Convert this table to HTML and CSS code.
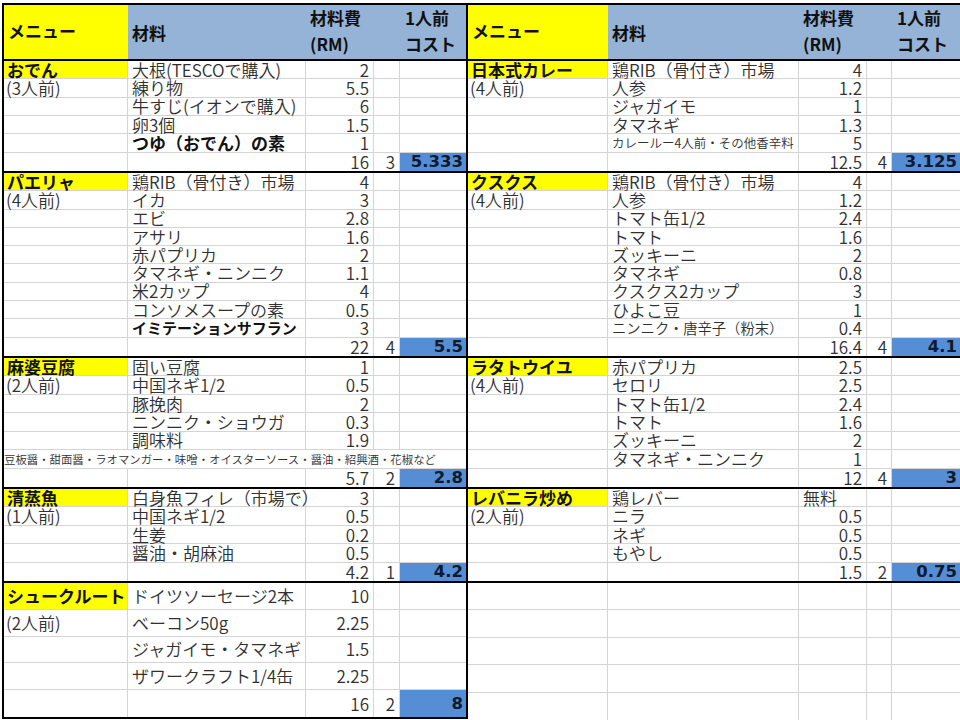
FILE: index.html
```html
<!DOCTYPE html>
<html lang="ja">
<head>
<meta charset="utf-8">
<title>材料費</title>
<link rel="stylesheet" href="styles.css">
</head>
<body>
<div class="sheet">
  <section class="side side-left">
    <div class="head">
      <div class="h h-menu">メニュー</div>
      <div class="h">材料</div>
      <div class="h h-two"><span>材料費</span><span>(RM)</span></div>
      <div class="h"></div>
      <div class="h h-two h-per"><span>1人前</span><span>コスト</span></div>
    </div>

    <div class="block b6">
      <div class="row"><div class="c name">おでん</div><div class="c">大根(TESCOで購入)</div><div class="c num">2</div><div class="c"></div><div class="c"></div></div>
      <div class="row"><div class="c serv">(3人前)</div><div class="c">練り物</div><div class="c num">5.5</div><div class="c"></div><div class="c"></div></div>
      <div class="row"><div class="c"></div><div class="c">牛すじ(イオンで購入)</div><div class="c num">6</div><div class="c"></div><div class="c"></div></div>
      <div class="row"><div class="c"></div><div class="c">卵3個</div><div class="c num">1.5</div><div class="c"></div><div class="c"></div></div>
      <div class="row"><div class="c"></div><div class="c bold">つゆ（おでん）の素</div><div class="c num">1</div><div class="c"></div><div class="c"></div></div>
      <div class="row"><div class="c"></div><div class="c"></div><div class="c num">16</div><div class="c num">3</div><div class="c tot">5.333</div></div>
    </div>

    <div class="block b10">
      <div class="row"><div class="c name">パエリャ</div><div class="c">鶏RIB（骨付き）市場</div><div class="c num">4</div><div class="c"></div><div class="c"></div></div>
      <div class="row"><div class="c serv">(4人前)</div><div class="c">イカ</div><div class="c num">3</div><div class="c"></div><div class="c"></div></div>
      <div class="row"><div class="c"></div><div class="c">エビ</div><div class="c num">2.8</div><div class="c"></div><div class="c"></div></div>
      <div class="row"><div class="c"></div><div class="c">アサリ</div><div class="c num">1.6</div><div class="c"></div><div class="c"></div></div>
      <div class="row"><div class="c"></div><div class="c">赤パプリカ</div><div class="c num">2</div><div class="c"></div><div class="c"></div></div>
      <div class="row"><div class="c"></div><div class="c">タマネギ・ニンニク</div><div class="c num">1.1</div><div class="c"></div><div class="c"></div></div>
      <div class="row"><div class="c"></div><div class="c">米2カップ</div><div class="c num">4</div><div class="c"></div><div class="c"></div></div>
      <div class="row"><div class="c"></div><div class="c">コンソメスープの素</div><div class="c num">0.5</div><div class="c"></div><div class="c"></div></div>
      <div class="row"><div class="c"></div><div class="c bold-sm">イミテーションサフラン</div><div class="c num">3</div><div class="c"></div><div class="c"></div></div>
      <div class="row"><div class="c"></div><div class="c"></div><div class="c num">22</div><div class="c num">4</div><div class="c tot">5.5</div></div>
    </div>

    <div class="block b7">
      <div class="row"><div class="c name">麻婆豆腐</div><div class="c">固い豆腐</div><div class="c num">1</div><div class="c"></div><div class="c"></div></div>
      <div class="row"><div class="c serv">(2人前)</div><div class="c">中国ネギ1/2</div><div class="c num">0.5</div><div class="c"></div><div class="c"></div></div>
      <div class="row"><div class="c"></div><div class="c">豚挽肉</div><div class="c num">2</div><div class="c"></div><div class="c"></div></div>
      <div class="row"><div class="c"></div><div class="c">ニンニク・ショウガ</div><div class="c num">0.3</div><div class="c"></div><div class="c"></div></div>
      <div class="row"><div class="c"></div><div class="c">調味料</div><div class="c num">1.9</div><div class="c"></div><div class="c"></div></div>
      <div class="row"><div class="c note">豆板醤・甜面醤・ラオマンガー・味噌・オイスターソース・醤油・紹興酒・花椒など</div></div>
      <div class="row"><div class="c"></div><div class="c"></div><div class="c num">5.7</div><div class="c num">2</div><div class="c tot">2.8</div></div>
    </div>

    <div class="block b5">
      <div class="row"><div class="c name">清蒸魚</div><div class="c">白身魚フィレ（市場で）</div><div class="c num">3</div><div class="c"></div><div class="c"></div></div>
      <div class="row"><div class="c serv">(1人前)</div><div class="c">中国ネギ1/2</div><div class="c num">0.5</div><div class="c"></div><div class="c"></div></div>
      <div class="row"><div class="c"></div><div class="c">生姜</div><div class="c num">0.2</div><div class="c"></div><div class="c"></div></div>
      <div class="row"><div class="c"></div><div class="c">醤油・胡麻油</div><div class="c num">0.5</div><div class="c"></div><div class="c"></div></div>
      <div class="row"><div class="c"></div><div class="c"></div><div class="c num">4.2</div><div class="c num">1</div><div class="c tot">4.2</div></div>
    </div>

    <div class="block b5t">
      <div class="row"><div class="c name">シュークルート</div><div class="c">ドイツソーセージ2本</div><div class="c num">10</div><div class="c"></div><div class="c"></div></div>
      <div class="row"><div class="c serv">(2人前)</div><div class="c">ベーコン50g</div><div class="c num">2.25</div><div class="c"></div><div class="c"></div></div>
      <div class="row"><div class="c"></div><div class="c">ジャガイモ・タマネギ</div><div class="c num">1.5</div><div class="c"></div><div class="c"></div></div>
      <div class="row"><div class="c"></div><div class="c">ザワークラフト1/4缶</div><div class="c num">2.25</div><div class="c"></div><div class="c"></div></div>
      <div class="row"><div class="c"></div><div class="c"></div><div class="c num">16</div><div class="c num">2</div><div class="c tot">8</div></div>
    </div>
  </section>

  <section class="side side-right">
    <div class="head">
      <div class="h h-menu">メニュー</div>
      <div class="h">材料</div>
      <div class="h h-two"><span>材料費</span><span>(RM)</span></div>
      <div class="h"></div>
      <div class="h h-two h-per"><span>1人前</span><span>コスト</span></div>
    </div>

    <div class="block b6">
      <div class="row"><div class="c name">日本式カレー</div><div class="c">鶏RIB（骨付き）市場</div><div class="c num">4</div><div class="c"></div><div class="c"></div></div>
      <div class="row"><div class="c serv">(4人前)</div><div class="c">人参</div><div class="c num">1.2</div><div class="c"></div><div class="c"></div></div>
      <div class="row"><div class="c"></div><div class="c">ジャガイモ</div><div class="c num">1</div><div class="c"></div><div class="c"></div></div>
      <div class="row"><div class="c"></div><div class="c">タマネギ</div><div class="c num">1.3</div><div class="c"></div><div class="c"></div></div>
      <div class="row"><div class="c"></div><div class="c small">カレールー4人前・その他香辛料</div><div class="c num">5</div><div class="c"></div><div class="c"></div></div>
      <div class="row"><div class="c"></div><div class="c"></div><div class="c num">12.5</div><div class="c num">4</div><div class="c tot">3.125</div></div>
    </div>

    <div class="block b10">
      <div class="row"><div class="c name">クスクス</div><div class="c">鶏RIB（骨付き）市場</div><div class="c num">4</div><div class="c"></div><div class="c"></div></div>
      <div class="row"><div class="c serv">(4人前)</div><div class="c">人参</div><div class="c num">1.2</div><div class="c"></div><div class="c"></div></div>
      <div class="row"><div class="c"></div><div class="c">トマト缶1/2</div><div class="c num">2.4</div><div class="c"></div><div class="c"></div></div>
      <div class="row"><div class="c"></div><div class="c">トマト</div><div class="c num">1.6</div><div class="c"></div><div class="c"></div></div>
      <div class="row"><div class="c"></div><div class="c">ズッキーニ</div><div class="c num">2</div><div class="c"></div><div class="c"></div></div>
      <div class="row"><div class="c"></div><div class="c">タマネギ</div><div class="c num">0.8</div><div class="c"></div><div class="c"></div></div>
      <div class="row"><div class="c"></div><div class="c">クスクス2カップ</div><div class="c num">3</div><div class="c"></div><div class="c"></div></div>
      <div class="row"><div class="c"></div><div class="c">ひよこ豆</div><div class="c num">1</div><div class="c"></div><div class="c"></div></div>
      <div class="row"><div class="c"></div><div class="c mid">ニンニク・唐辛子（粉末）</div><div class="c num">0.4</div><div class="c"></div><div class="c"></div></div>
      <div class="row"><div class="c"></div><div class="c"></div><div class="c num">16.4</div><div class="c num">4</div><div class="c tot">4.1</div></div>
    </div>

    <div class="block b7">
      <div class="row"><div class="c name">ラタトウイユ</div><div class="c">赤パプリカ</div><div class="c num">2.5</div><div class="c"></div><div class="c"></div></div>
      <div class="row"><div class="c serv">(4人前)</div><div class="c">セロリ</div><div class="c num">2.5</div><div class="c"></div><div class="c"></div></div>
      <div class="row"><div class="c"></div><div class="c">トマト缶1/2</div><div class="c num">2.4</div><div class="c"></div><div class="c"></div></div>
      <div class="row"><div class="c"></div><div class="c">トマト</div><div class="c num">1.6</div><div class="c"></div><div class="c"></div></div>
      <div class="row"><div class="c"></div><div class="c">ズッキーニ</div><div class="c num">2</div><div class="c"></div><div class="c"></div></div>
      <div class="row"><div class="c"></div><div class="c">タマネギ・ニンニク</div><div class="c num">1</div><div class="c"></div><div class="c"></div></div>
      <div class="row"><div class="c"></div><div class="c"></div><div class="c num">12</div><div class="c num">4</div><div class="c tot">3</div></div>
    </div>

    <div class="block b5">
      <div class="row"><div class="c name">レバニラ炒め</div><div class="c">鶏レバー</div><div class="c">無料</div><div class="c"></div><div class="c"></div></div>
      <div class="row"><div class="c serv">(2人前)</div><div class="c">ニラ</div><div class="c num">0.5</div><div class="c"></div><div class="c"></div></div>
      <div class="row"><div class="c"></div><div class="c">ネギ</div><div class="c num">0.5</div><div class="c"></div><div class="c"></div></div>
      <div class="row"><div class="c"></div><div class="c">もやし</div><div class="c num">0.5</div><div class="c"></div><div class="c"></div></div>
      <div class="row"><div class="c"></div><div class="c"></div><div class="c num">1.5</div><div class="c num">2</div><div class="c tot">0.75</div></div>
    </div>

    <div class="block b5t open">
      <div class="row"><div class="c"></div><div class="c"></div><div class="c"></div><div class="c"></div><div class="c"></div></div>
      <div class="row"><div class="c"></div><div class="c"></div><div class="c"></div><div class="c"></div><div class="c"></div></div>
      <div class="row"><div class="c"></div><div class="c"></div><div class="c"></div><div class="c"></div><div class="c"></div></div>
      <div class="row"><div class="c"></div><div class="c"></div><div class="c"></div><div class="c"></div><div class="c"></div></div>
      <div class="row"><div class="c"></div><div class="c"></div><div class="c"></div><div class="c"></div><div class="c"></div></div>
    </div>
  </section>
</div>
</body>
</html>
```

FILE: styles.css
```css
* {
  box-sizing: border-box;
  margin: 0;
  padding: 0;
}

html,
body {
  width: 960px;
  height: 720px;
  overflow: hidden;
  background: #fff;
}

body {
  font-family: "Noto Sans CJK JP", "Noto Sans", sans-serif;
  font-size: 17px;
  font-weight: 350;
  color: #303030;
}

.sheet {
  display: flex;
  align-items: flex-start;
  padding: 3px 0 0 2px;
}

.side {
  flex: none;
  border-top: 2px solid #000;
}

.side-left {
  --cols: 124px 178px 68px 26px 66px;
  width: 466px;
  border-left: 2px solid #000;
  border-right: 2px solid #000;
}

.side-right {
  --cols: 140px 191px 68px 25px 68px;
  width: 492px;
}

/* header */
.head {
  display: grid;
  grid-template-columns: var(--cols);
  height: 56px;
  border-bottom: 2px solid #000;
}

.h {
  display: flex;
  align-items: center;
  padding-left: 4px;
  background: #95b3d7;
  color: #111;
  font-weight: 700;
  white-space: nowrap;
}

.h-menu {
  background: #ffff00;
  padding-bottom: 3px;
}

.h-two {
  flex-direction: column;
  align-items: flex-start;
  justify-content: center;
  line-height: 26px;
  padding-bottom: 2px;
}

.h-per {
  padding-left: 5px;
}

/* blocks */
.block {
  display: flex;
  flex-direction: column;
  border-bottom: 2px solid #000;
}

.block.open {
  border-bottom: none;
}

.b6 { height: 112px; }
.b10 { height: 185px; }
.b7 { height: 131px; }
.b5 { height: 94px; }
.b5t { height: 136px; }
.block.open.b5t { height: 137px; }

.row {
  flex: 1 1 0;
  min-height: 0;
  display: grid;
  grid-template-columns: var(--cols);
}

.c {
  display: flex;
  align-items: center;
  padding: 0 4px;
  line-height: 16px;
  white-space: nowrap;
  border-right: 1px solid #d4d4d4;
  border-bottom: 1px solid #d4d4d4;
  min-width: 0;
}

.c:last-child {
  border-right: none;
}

.row:last-child .c {
  border-bottom: none;
}

.num {
  justify-content: flex-end;
}

.name {
  background: #ffff00;
  color: #111;
  font-weight: 700;
  padding-left: 3px;
}

.serv {
  padding-left: 2px;
}

.bold {
  font-weight: 700;
  color: #111;
}

.bold-sm {
  font-weight: 700;
  font-size: 15px;
  color: #111;
}

.small {
  font-size: 12.5px;
}

.mid {
  font-size: 14.3px;
}

.note {
  grid-column: 1 / -1;
  padding-left: 0;
  font-size: 11.4px;
}

.tot {
  justify-content: flex-end;
  padding-right: 3px;
  background: #558ed5;
  color: #0d1a30;
  font-family: "DejaVu Sans", sans-serif;
  font-weight: 700;
  font-size: 16.5px;
}
```
